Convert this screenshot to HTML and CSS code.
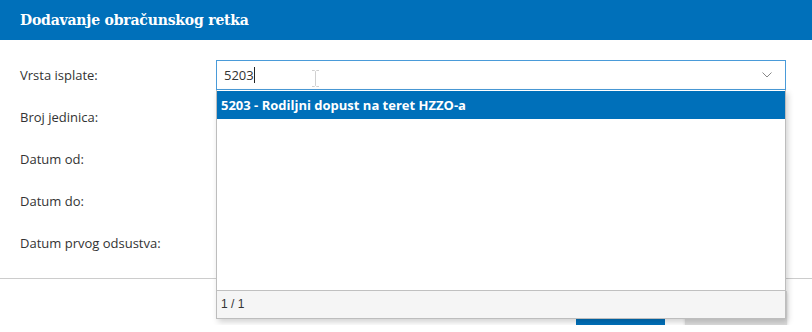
FILE: index.html
```html
<!DOCTYPE html>
<html lang="hr">
<head>
    <meta charset="UTF-8">
    <meta name="viewport" content="width=device-width, initial-scale=1.0">
    <title>Dodavanje obračunskog retka</title>
    <link rel="stylesheet" href="styles.css">
</head>
<body>
    <div class="modal">
        <div class="modal-header">
            <h1>Dodavanje obračunskog retka</h1>
        </div>

        <div class="modal-body">
            <div class="row">
                <label>Vrsta isplate:</label>
                <div class="field">
                    <div class="select">
                        <span class="select-value">5203<span class="caret"></span></span>
                        <svg class="chevron" width="10" height="6" viewBox="0 0 10 6">
                            <path d="M0.5 0.5 L5 5 L9.5 0.5" fill="none" stroke="#888" stroke-width="1"/>
                        </svg>
                        <!-- mouse pointer -->
                        <svg class="ibeam" width="7" height="17" viewBox="0 0 7 17">
                            <path d="M0 0.5 H2.5 L3.5 1.5 L4.5 0.5 H7 M3.5 1.5 V15.5 M0 16.5 H2.5 L3.5 15.5 L4.5 16.5 H7" fill="none" stroke="#d0d0d0" stroke-width="1"/>
                        </svg>
                    </div>
                    <div class="dropdown">
                        <div class="dropdown-list">
                            <div class="option active">5203 - Rodiljni dopust na teret HZZO-a</div>
                        </div>
                        <div class="dropdown-footer">1 / 1</div>
                    </div>
                </div>
            </div>
            <div class="row">
                <label>Broj jedinica:</label>
                <div class="field"><input type="text" class="input"></div>
            </div>
            <div class="row">
                <label>Datum od:</label>
                <div class="field"><input type="text" class="input"></div>
            </div>
            <div class="row">
                <label>Datum do:</label>
                <div class="field"><input type="text" class="input"></div>
            </div>
            <div class="row">
                <label>Datum prvog odsustva:</label>
                <div class="field"><input type="text" class="input"></div>
            </div>
        </div>

        <div class="modal-footer">
            <button class="btn btn-primary">Spremi</button>
            <button class="btn btn-secondary">Odustani</button>
        </div>
    </div>
</body>
</html>
```

FILE: styles.css
```css
body {
    margin: 0;
    padding: 0;
    font-family: "Open Sans", sans-serif;
    font-size: 13px;
    color: #333;
    background: #fff;
}
.modal-header {
    height: 40px;
    background-color: #0070ba;
    display: flex;
    align-items: center;
    padding: 0 20px;
}
.modal-header h1 {
    margin: 0;
    color: #fff;
    font-family: "DejaVu Serif", serif;
    font-size: 14px;
    font-weight: bold;
    letter-spacing: -0.2px;
}
.modal-body {
    padding: 20px 26px 20px 20px;
    display: flex;
    flex-direction: column;
    gap: 12px;
}
.row {
    display: flex;
    align-items: center;
    height: 30px;
}
.row label {
    width: 196px;
    flex-shrink: 0;
}
.field {
    flex: 1;
    position: relative;
    height: 30px;
}
.input {
    width: 100%;
    height: 30px;
    box-sizing: border-box;
    border: 1px solid #ccc;
    font-family: inherit;
    font-size: 13px;
}
.select {
    position: relative;
    height: 30px;
    box-sizing: border-box;
    border: 1px solid #4a9bd9;
    display: flex;
    align-items: center;
    justify-content: space-between;
    padding: 0 13px 0 7px;
}
.select-value {
    display: flex;
    align-items: center;
}
.caret {
    display: inline-block;
    width: 1px;
    height: 16px;
    background: #222;
}
.ibeam {
    position: absolute;
    left: 95px;
    top: 9px;
}
.dropdown {
    position: absolute;
    top: 30px;
    left: 0;
    right: 0;
    height: 229px;
    box-sizing: border-box;
    border: 1px solid #bdbdbd;
    border-top: none;
    background: #fff;
    box-shadow: 2px 3px 6px rgba(0, 0, 0, 0.18);
    display: flex;
    flex-direction: column;
    z-index: 10;
}
.dropdown-list {
    flex: 1;
    padding-top: 1px;
}
.option {
    height: 28px;
    line-height: 28px;
    padding: 0 4px;
}
.option.active {
    background-color: #0070ba;
    color: #fff;
    font-weight: bold;
}
.dropdown-footer {
    height: 27px;
    line-height: 27px;
    border-top: 1px solid #c0c0c0;
    background: #f5f5f5;
    padding: 0 4px;
    font-family: "Liberation Sans", Arial, sans-serif;
    font-size: 12px;
}
.modal-footer {
    border-top: 1px solid #ccc;
    padding: 12px 25px 0 0;
    display: flex;
    justify-content: flex-end;
    gap: 20px;
}
.btn {
    height: 34px;
    border: none;
    font-family: inherit;
    font-size: 13px;
}
.btn-primary {
    width: 89px;
    background-color: #0070ba;
    color: #fff;
}
.btn-secondary {
    width: 102px;
    background-color: #dcdcdc;
    color: #333;
    box-shadow: 0 2px 3px rgba(0, 0, 0, 0.15);
}
```
